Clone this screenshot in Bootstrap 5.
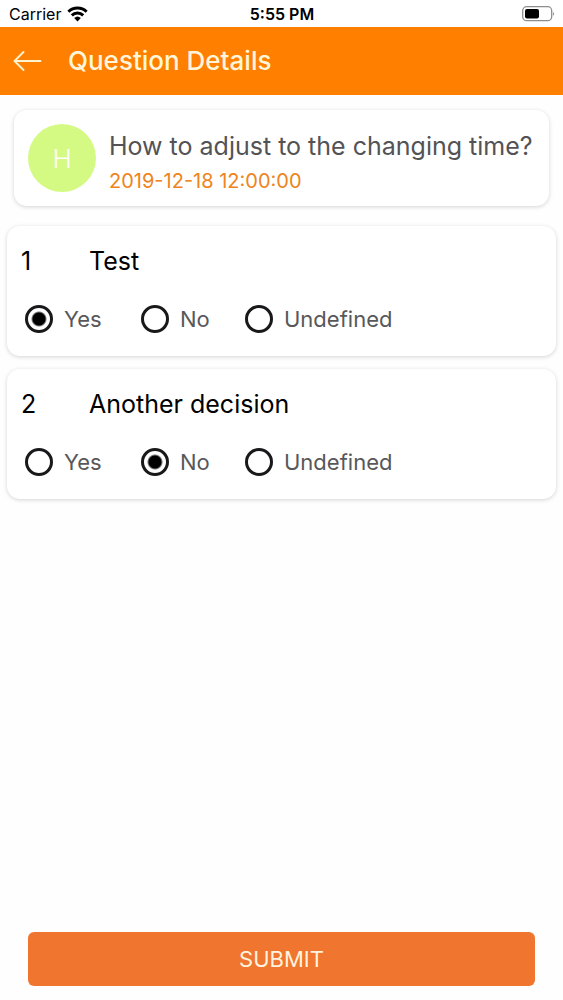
<!DOCTYPE html>
<html lang="en">
<head>
<meta charset="utf-8">
<meta name="viewport" content="width=device-width, initial-scale=1">
<title>Question Details</title>
<link href="https://cdn.jsdelivr.net/npm/bootstrap@5.3.0/dist/css/bootstrap.min.css" rel="stylesheet">
<style>
  body { font-family: Inter, "Liberation Sans", sans-serif; background: #fefefe; color: #000; }
  .status-bar { height: 27px; padding: 1px 8px 0 9px; font-size: 16px; line-height: 26px; }
  .status-side { flex: 1 1 0; gap: 6px; }
  .app-bar { height: 68px; padding: 0 13px; gap: 26px; background: #ff8000; }
  .app-title { font-size: 26px; line-height: 32px; font-weight: 450; color: #fff6dc; }
  .panel { background: #fff; border-radius: 13px; box-shadow: 0 1px 4px rgba(0, 0, 0, .17); }
  .topic { margin: 15px 14px 0; padding: 14px; gap: 13px; }
  .avatar { width: 68px; height: 68px; background: #d5fa84; color: #fff; font-size: 26px; font-weight: 300; }
  .topic-text { padding-top: 6px; }
  .topic-title { margin-bottom: 8px; font-size: 25px; line-height: 32px; color: #535355; }
  .topic-date { font-size: 20px; line-height: 22px; color: #ee8420; }
  .questions { margin: 20px 7px 0; gap: 13px; }
  .question { padding: 18px 14px 23px; }
  .question-head { display: grid; grid-template-columns: 68px 1fr; margin: 0; font-size: 25px; line-height: 35px; font-weight: 400; }
  .choices { display: grid; grid-template-columns: 116px 104px 1fr; margin-top: 26px; padding-left: 4px; }
  .choice { gap: 11px; font-size: 22px; line-height: 28px; color: #58585a; }
  .form-check-input.dot { width: 28px; height: 28px; border: 3px solid #19191b; background: #fff; }
  .form-check-input.dot:checked { background: radial-gradient(circle, #000 0 6px, #fff 8px); border-color: #19191b; }
  .actions { padding: 14px 28px; }
  .submit, .submit:hover { height: 54px; border: 0; border-radius: 6px; background: #f0752e; color: #fff3df; font-size: 22px; }
</style>
</head>
<body>
<div class="d-flex flex-column min-vh-100">
  <div class="status-bar d-flex align-items-center bg-white">
    <div class="status-side d-flex align-items-center">
      <span>Carrier</span>
      <svg width="21" height="16" viewBox="0 0 21 16" fill="none" stroke="#000" stroke-width="3" aria-label="Wi-Fi">
        <path d="M1.400 5.700a13 13 0 0 1 18.200 0M4.800 9.300a8.200 8.200 0 0 1 11.400 0"/>
        <path d="M7.200 12a4.800 4.800 0 0 1 6.600 0L10.500 15.500z" fill="#000" stroke="none"/>
      </svg>
    </div>
    <span class="fw-semibold">5:55 PM</span>
    <div class="status-side d-flex align-items-center justify-content-end">
      <svg width="33" height="16" viewBox="0 0 33 16" aria-label="Battery">
        <rect x=".7" y=".7" width="29" height="14" rx="4" fill="#fff" stroke="#8d8d8d" stroke-width="1.300"/>
        <rect x="3" y="3" width="14" height="9.500" rx="2" fill="#000"/>
        <path d="M31.200 5.500q1.800 2.200 0 4.500z" fill="#777"/>
      </svg>
    </div>
  </div>

  <header class="app-bar d-flex align-items-center">
    <a href="#" class="d-flex" aria-label="Back">
      <svg width="29" height="20" viewBox="0 0 29 20" fill="none" stroke="#fff3d0" stroke-width="1.800" stroke-linecap="round" stroke-linejoin="round">
        <path d="M27.500 10H1.500M10.500 1L1.500 10l9 9"/>
      </svg>
    </a>
    <h1 class="app-title mb-0">Question Details</h1>
  </header>

  <form class="d-flex flex-column flex-grow-1">
    <section class="panel topic d-flex">
      <div class="avatar rounded-circle d-flex flex-shrink-0 align-items-center justify-content-center">H</div>
      <div class="topic-text">
        <h2 class="topic-title fw-normal">How to adjust to the changing time?</h2>
        <div class="topic-date">2019-12-18 12:00:00</div>
      </div>
    </section>

    <div class="questions d-flex flex-column">
      <section class="panel question">
        <h3 class="question-head"><span>1</span><span>Test</span></h3>
        <div class="choices">
          <label class="choice d-flex align-items-center"><input class="form-check-input dot m-0" type="radio" name="q1" checked>Yes</label>
          <label class="choice d-flex align-items-center"><input class="form-check-input dot m-0" type="radio" name="q1">No</label>
          <label class="choice d-flex align-items-center"><input class="form-check-input dot m-0" type="radio" name="q1">Undefined</label>
        </div>
      </section>
      <section class="panel question">
        <h3 class="question-head"><span>2</span><span>Another decision</span></h3>
        <div class="choices">
          <label class="choice d-flex align-items-center"><input class="form-check-input dot m-0" type="radio" name="q2">Yes</label>
          <label class="choice d-flex align-items-center"><input class="form-check-input dot m-0" type="radio" name="q2" checked>No</label>
          <label class="choice d-flex align-items-center"><input class="form-check-input dot m-0" type="radio" name="q2">Undefined</label>
        </div>
      </section>
    </div>

    <div class="actions mt-auto">
      <button type="submit" class="btn submit w-100">SUBMIT</button>
    </div>
  </form>
</div>
<script src="https://cdn.jsdelivr.net/npm/bootstrap@5.3.0/dist/js/bootstrap.bundle.min.js"></script>
</body>
</html>
